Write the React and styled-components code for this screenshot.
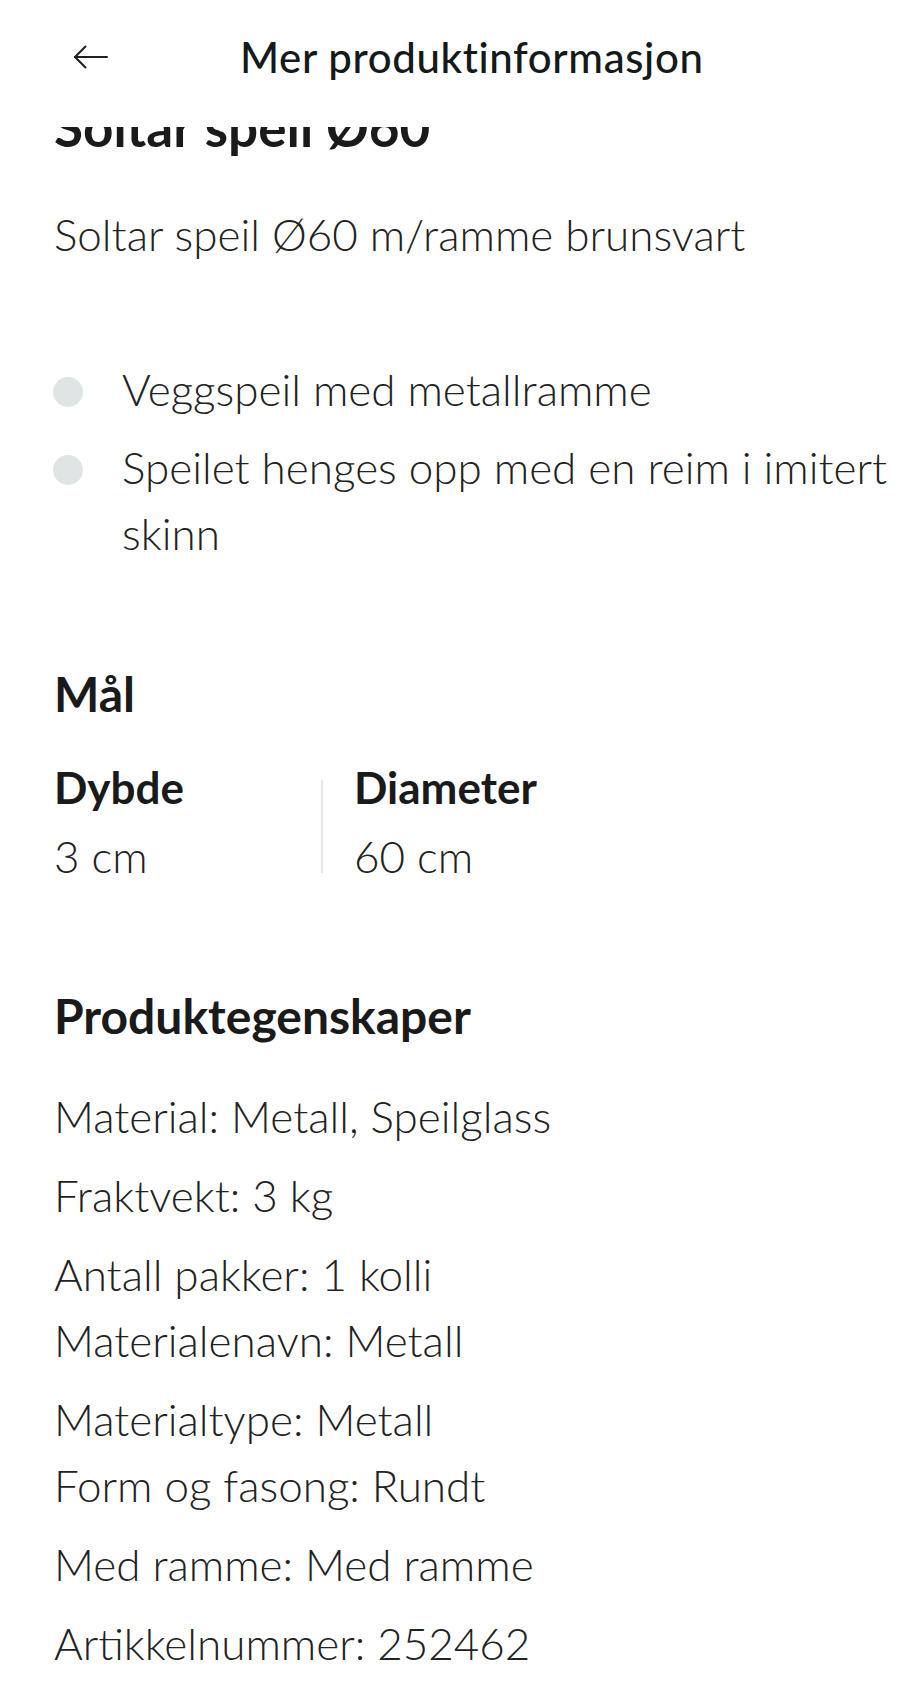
import React from "react";
import styled, { createGlobalStyle } from "styled-components";

const GlobalStyle = createGlobalStyle`
  html, body { margin: 0; padding: 0; background: #ffffff; }
  body { font-family: "Lato", "Noto Sans", sans-serif; color: #222222; }
  * { box-sizing: border-box; }
`;

const Header = styled.header`
  position: fixed;
  top: 0;
  left: 0;
  right: 0;
  height: 127px;
  background: #ffffff;
  z-index: 10;
`;

const HeaderRow = styled.div`
  height: 114px;
  display: flex;
  align-items: center;
  padding-left: 73px;
  gap: 132px;
`;

const BackButton = styled.button`
  display: flex;
  align-items: center;
  justify-content: center;
  width: 35px;
  height: 24px;
  padding: 0;
  border: none;
  background: none;
  color: #1e1e1e;
  cursor: pointer;
`;

const HeaderTitle = styled.h1`
  margin: 0;
  font-family: "Lato", sans-serif;
  font-weight: 500;
  font-size: 42px;
  line-height: 1.2;
  letter-spacing: 0.6px;
  color: #141a1a;
`;

const Content = styled.main`
  padding: 96px 4px 40px 54px;
  display: flex;
  flex-direction: column;
`;

const ProductName = styled.h2`
  margin: 0;
  font-weight: 700;
  font-size: 53px;
  line-height: 62px;
  color: #1a1a1a;
`;

const Body = styled.p`
  margin: ${(p) => p.$top || 0}px 0 0;
  font-weight: 300;
  font-size: 44px;
  line-height: 66px;
  color: #222222;
`;

const BulletList = styled.ul`
  margin: 89px 0 0;
  padding: 0;
  list-style: none;
  display: flex;
  flex-direction: column;
  gap: 12px;
`;

const BulletItem = styled.li`
  display: flex;
  align-items: flex-start;
  font-weight: 300;
  font-size: 44px;
  line-height: 66px;
  color: #222222;
`;

const Dot = styled.span`
  flex: none;
  width: 30px;
  height: 30px;
  margin: 21px 39px 0 -1px;
  border-radius: 50%;
  background: #e1e4e4;
`;

const SectionTitle = styled.h3`
  margin: ${(p) => p.$top}px 0 0;
  font-weight: 700;
  font-size: 48px;
  line-height: 60px;
  color: #1a1a1a;
`;

const Dimensions = styled.div`
  margin-top: 30px;
  display: flex;
  align-items: flex-start;
`;

const DimCol = styled.div`
  display: flex;
  flex-direction: column;
  width: ${(p) => (p.$w ? `${p.$w}px` : "auto")};
`;

const DimLabel = styled.span`
  font-weight: 700;
  font-size: 44px;
  line-height: 66px;
  color: #1a1a1a;
`;

const DimValue = styled.span`
  margin-top: 3px;
  font-weight: 300;
  font-size: 44px;
  line-height: 66px;
  color: #222222;
`;

const Divider = styled.span`
  flex: none;
  width: 2px;
  height: 93px;
  margin: 26px 31px 0 0;
  background: #e6e6e6;
`;

const Props = styled.div`
  margin-top: 37px;
  display: flex;
  flex-direction: column;
  gap: 13px;
`;

const PropPara = styled.p`
  margin: 0;
  font-weight: 300;
  font-size: 44px;
  line-height: 66px;
  color: #222222;
`;

const ArrowIcon = () => (
  <svg width="35" height="24" viewBox="0 0 35 24" fill="none" stroke="currentColor" strokeWidth="2" strokeLinecap="round" strokeLinejoin="round">
    <path d="M34 12H2" />
    <path d="M12.5 1.5L2 12l10.5 10.5" />
  </svg>
);

const properties = [
  ["Material: Metall, Speilglass"],
  ["Fraktvekt: 3 kg"],
  ["Antall pakker: 1 kolli", "Materialenavn: Metall"],
  ["Materialtype: Metall", "Form og fasong: Rundt"],
  ["Med ramme: Med ramme"],
  ["Artikkelnummer: 252462"],
];

export default function App() {
  return (
    <>
      <GlobalStyle />
      <Header>
        <HeaderRow>
          <BackButton aria-label="Tilbake">
            <ArrowIcon />
          </BackButton>
          <HeaderTitle>Mer produktinformasjon</HeaderTitle>
        </HeaderRow>
      </Header>
      <Content>
        <ProductName>Soltar speil Ø60</ProductName>
        <Body $top={43}>Soltar speil Ø60 m/ramme brunsvart</Body>
        <BulletList>
          <BulletItem>
            <Dot />
            <span>Veggspeil med metallramme</span>
          </BulletItem>
          <BulletItem>
            <Dot />
            <span>Speilet henges opp med en reim i imitert skinn</span>
          </BulletItem>
        </BulletList>
        <SectionTitle $top={98}>Mål</SectionTitle>
        <Dimensions>
          <DimCol $w={267}>
            <DimLabel>Dybde</DimLabel>
            <DimValue>3 cm</DimValue>
          </DimCol>
          <Divider />
          <DimCol>
            <DimLabel>Diameter</DimLabel>
            <DimValue>60 cm</DimValue>
          </DimCol>
        </Dimensions>
        <SectionTitle $top={97}>Produktegenskaper</SectionTitle>
        <Props>
          {properties.map((lines, i) => (
            <PropPara key={i}>
              {lines.map((l, j) => (
                <React.Fragment key={j}>
                  {j > 0 && <br />}
                  {l}
                </React.Fragment>
              ))}
            </PropPara>
          ))}
        </Props>
      </Content>
    </>
  );
}
